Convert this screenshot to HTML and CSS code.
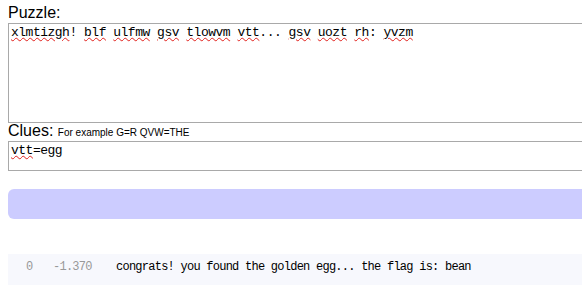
FILE: index.html
```html
<!DOCTYPE html>
<html>
<head>
<title>Puzzle</title>
<meta charset="utf-8">
<link rel="stylesheet" href="styles.css">
</head>
<body>
<div class="content">
  <div class="label">Puzzle:</div>
  <div class="field puzzle" contenteditable="true" spellcheck="false"><span class="typo">xlmtizgh</span>! <span class="typo">blf</span> <span class="typo">ulfmw</span> <span class="typo">gsv</span> <span class="typo">tlowvm</span> <span class="typo">vtt</span>... <span class="typo">gsv</span> <span class="typo">uozt</span> <span class="typo">rh</span>: <span class="typo">yvzm</span></div>

  <div class="label">Clues: <small>For example G=R QVW=THE</small></div>
  <div class="field clues" contenteditable="true" spellcheck="false"><span class="typo">vtt</span>=egg</div>

  <div class="progress"></div>

  <div class="results">
    <div class="row">
      <span class="idx">0</span>
      <span class="score">-1.370</span>
      <span class="text">congrats! you found the golden egg... the flag is: bean</span>
    </div>
  </div>
</div>
</body>
</html>
```

FILE: styles.css
```css
html {
  overflow: hidden;
}

body {
  margin: 0;
  padding: 5px 8px 0;
  background: #fff;
  font-family: "Liberation Sans", Arial, sans-serif;
  color: #000;
}

.content {
  width: 640px;
}

.label {
  font-size: 16px;
  line-height: 16px;
  height: 16px;
  margin-bottom: 2px;
}

.label small {
  font-size: 10px;
}

.field {
  box-sizing: border-box;
  border: 1px solid #a9a9a9;
  padding: 2px;
  font-family: "Liberation Mono", "Courier New", monospace;
  font-size: 13px;
  letter-spacing: -0.5px;
  line-height: 14px;
  outline: none;
  white-space: pre-wrap;
}

.puzzle {
  height: 100px;
}

.clues {
  height: 30px;
}

.typo {
  text-decoration: underline wavy #e0201c;
  text-decoration-thickness: 0.7px;
  text-underline-offset: 1px;
}

.progress {
  margin-top: 18px;
  height: 30px;
  background: #ccccff;
  border-radius: 6px;
}

.results {
  margin-top: 35px;
  background: #f7f8fd;
}

.row {
  display: flex;
  padding: 5px 0 14px 18px;
  font-family: "Liberation Mono", "Courier New", monospace;
  font-size: 12px;
  letter-spacing: -0.75px;
  line-height: 16px;
}

.idx {
  width: 27px;
  color: #999;
}

.score {
  width: 63px;
  color: #999;
}

.text {
  color: #000;
}
```
